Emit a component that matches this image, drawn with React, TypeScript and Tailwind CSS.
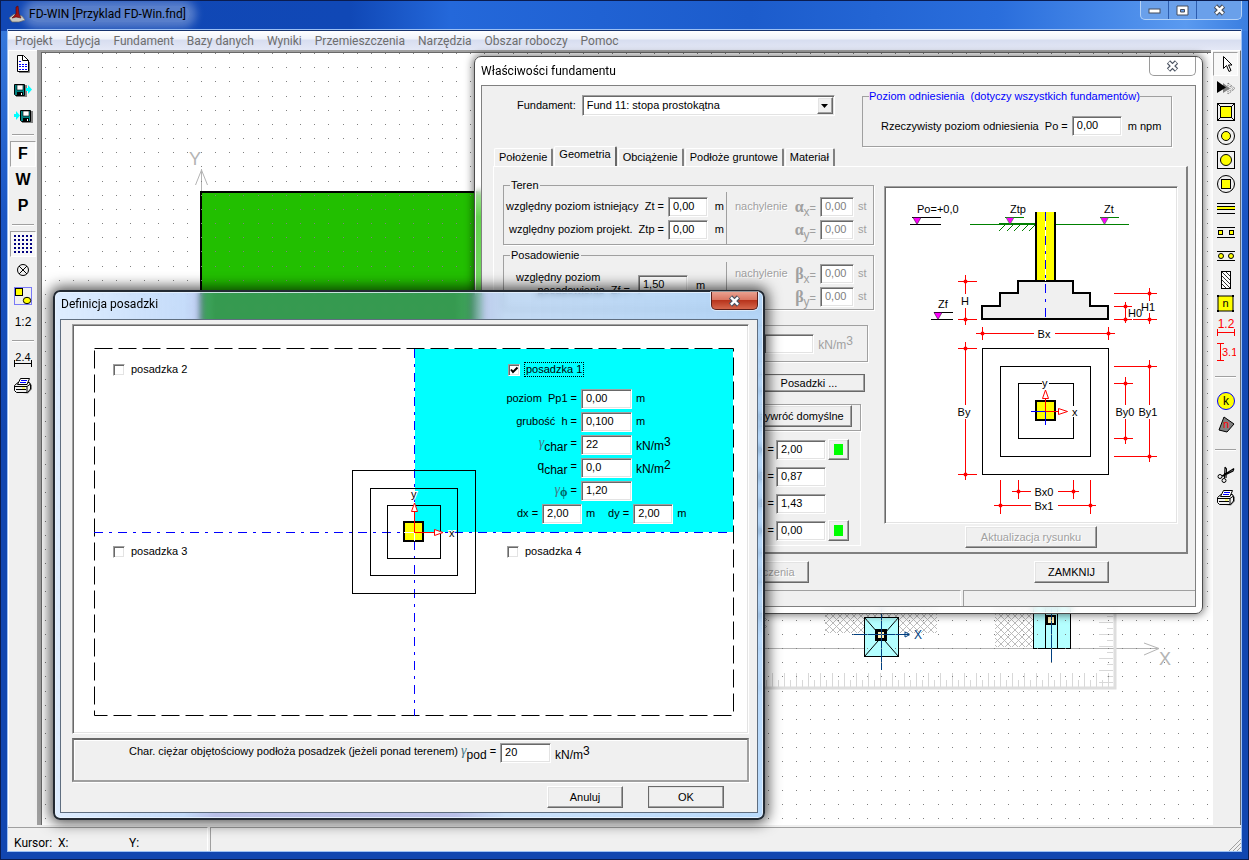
import { useState } from "react";
import type { ReactNode } from "react";

const sunken =
  "border border-t-[#a0a0a0] border-l-[#a0a0a0] border-b-white border-r-white shadow-[inset_1px_1px_0_#696969,inset_-1px_-1px_0_#e3e3e3]";
const raised =
  "border border-t-white border-l-white border-b-[#696969] border-r-[#696969] shadow-[inset_-1px_-1px_0_#a0a0a0,inset_1px_1px_0_#e3e3e3] bg-[#f0f0f0]";
const etched = "border border-[#a0a0a0] shadow-[1px_1px_0_#fff]";
const uiFont = "font-[Roboto,'Noto_Sans',sans-serif]";

type FieldProps = { id: string; value: string; width: string; disabled?: boolean };

function Field({ id, value, width, disabled }: FieldProps) {
  const [text, setText] = useState(value);
  return (
    <input
      id={id}
      type="text"
      value={text}
      disabled={disabled}
      onChange={(e) => setText(e.target.value)}
      className={`${sunken} ${width} h-5 shrink-0 bg-white px-1 pb-0.5 text-[11px] leading-[13px] text-black outline-none disabled:text-[#808080]`}
    />
  );
}

function Btn({ children, className = "", disabled }: { children: ReactNode; className?: string; disabled?: boolean }) {
  return (
    <button
      type="button"
      disabled={disabled}
      className={`${raised} flex shrink-0 items-center justify-center whitespace-nowrap text-[11px] leading-[13px] disabled:text-[#a0a0a0] disabled:[text-shadow:1px_1px_0_#fff] ${className}`}
    >
      {children}
    </button>
  );
}

function Check({ id, label, initial = false }: { id: string; label: string; initial?: boolean }) {
  const [on, setOn] = useState(initial);
  return (
    <div className="flex items-center gap-1">
      <span className="relative flex size-3">
        <input
          id={id}
          type="checkbox"
          checked={on}
          onChange={() => setOn(!on)}
          className={`${sunken} size-3 appearance-none bg-white`}
        />
        {on && (
          <svg className="pointer-events-none absolute inset-0" width="12" height="12" viewBox="0 0 12 12">
            <path d="M3 5.5 L5 8 L9.5 3.5" fill="none" stroke="#000" strokeWidth="2" />
          </svg>
        )}
      </span>
      <label
        htmlFor={id}
        className={`border border-dotted px-px text-[11px] leading-[13px] ${on ? "border-black" : "border-transparent"}`}
      >
        {label}
      </label>
    </div>
  );
}

function CloseGlyph() {
  return (
    <svg width="13" height="12" viewBox="0 0 13 12" aria-hidden="true">
      <path d="M2.5 2 L10.5 10 M10.5 2 L2.5 10" stroke="#4a5260" strokeWidth="4.6" />
      <path d="M2.9 2.4 L10.1 9.6 M10.1 2.4 L2.9 9.6" stroke="#fff" strokeWidth="2.4" />
    </svg>
  );
}

/* ---------- toolbar icons ---------- */

function Floppy({ x }: { x: number }) {
  return (
    <g transform={`translate(${x} 4)`}>
      <path d="M1 1h11v12h-11z" fill="#808080" transform="translate(1 0)" />
      <path d="M0.5 0.5h10v11h-9l-1-1z" fill="#008080" stroke="#000" />
      <path d="M3 1h6v5h-6z" fill="#fff" stroke="#000" strokeWidth=".6" />
      <path d="M3 8h6v4h-6z" fill="#000" />
      <path d="M7 9h1v2h-1z" fill="#fff" />
    </g>
  );
}

function Printer() {
  return (
    <svg width="20" height="18" viewBox="0 0 20 18">
      <path d="M4 15.5 L15 16.5 L19 12 L19 8 L16 6" fill="#808080" />
      <path d="M1.5 8.5 L5 5.5 H16.5 L17.5 8 V12 L14.5 15.5 H3.5 L1.5 13.5 Z" fill="#f0f0f0" stroke="#000" />
      <path d="M7.5 1.5 H16.5 L14 7.5 H4.5 Z" fill="#fff" stroke="#000" />
      <path d="M8 3.5h6M7 5.5h6" stroke="#00f" strokeWidth="1.2" />
      <path d="M1.5 9.5 H14 L17.5 7 M14 9.5 V15" fill="none" stroke="#000" />
      <path d="M3 12.5h10" stroke="#000" />
      <path d="M9 11h3" stroke="#ff0" />
    </svg>
  );
}

const leftTools: { name: string; icon: ReactNode; pressed?: boolean; sep?: boolean }[] = [
  {
    name: "Nowy projekt",
    icon: (
      <svg width="20" height="20" viewBox="0 0 20 20">
        <path d="M6 18.500h10.500V8" fill="none" stroke="#808080" />
        <path d="M4.500 1.500h6l5 5v11h-11z" fill="#fff" stroke="#000" />
        <path d="M9.500 1.500v5h6" fill="none" stroke="#000" />
        <path d="M6 7.500h2M6 10.500h8M6 12.500h8M6 15.500h8" fill="none" stroke="#00f" strokeDasharray="2 1" />
      </svg>
    ),
  },
  {
    name: "Zapisz",
    icon: (
      <svg width="20" height="20" viewBox="0 0 20 20">
        <Floppy x={1} />
        <path d="M13 8h2v-3l4 4.500-4 4.500v-3h-2z" fill="#0ff" />
      </svg>
    ),
  },
  {
    name: "Wczytaj",
    icon: (
      <svg width="20" height="20" viewBox="0 0 20 20">
        <path d="M1 8h2v-3l4 4.500-4 4.500v-3h-2z" fill="#0ff" />
        <Floppy x={7} />
      </svg>
    ),
    sep: true,
  },
  { name: "F", icon: <span className="text-base font-bold">F</span>, pressed: true },
  { name: "W", icon: <span className="text-base font-bold">W</span> },
  { name: "P", icon: <span className="text-base font-bold">P</span>, sep: true },
  {
    name: "Siatka",
    pressed: true,
    icon: (
      <svg width="20" height="20" viewBox="0 0 20 20">
        <defs>
          <pattern id="navy" width="4" height="4" patternUnits="userSpaceOnUse">
            <rect x="1" y="1" width="2" height="2" fill="#000080" />
          </pattern>
        </defs>
        <rect width="20" height="20" fill="url(#navy)" />
      </svg>
    ),
  },
  {
    name: "Punkt",
    icon: (
      <svg width="14" height="14" viewBox="0 0 14 14" fill="none" stroke="#000">
        <circle cx="7" cy="7" r="5.500" />
        <path d="M3 3l8 8M11 3l-8 8" />
      </svg>
    ),
  },
  {
    name: "Zaznacz",
    icon: (
      <svg width="20" height="20" viewBox="0 0 20 20">
        <rect x="1.500" y="1.500" width="17" height="17" fill="none" stroke="#00f" strokeDasharray="1 1" />
        <rect x="2.500" y="2.500" width="7" height="7" fill="#ff0" stroke="#000" />
        <ellipse cx="14" cy="14.500" rx="3.700" ry="3.200" fill="#ff0" stroke="#000" />
      </svg>
    ),
  },
  { name: "Skala 1:2", icon: <span className="text-xs">1:2</span>, sep: true },
  {
    name: "Wymiary",
    icon: (
      <svg width="20" height="18" viewBox="0 0 20 18">
        <text x="10" y="10" fontSize="11" textAnchor="middle">2.4</text>
        <path d="M1.500 9v7M18.500 9v7M1.500 12.500h17" stroke="#000" />
      </svg>
    ),
  },
  { name: "Drukuj", icon: <Printer /> },
];

const rightTools: { name: string; icon: ReactNode; pressed?: boolean; sep?: boolean }[] = [
  {
    name: "Wskaźnik",
    pressed: true,
    icon: (
      <svg width="20" height="20" viewBox="0 0 20 20">
        <path d="M7.500 2.500v12l3-3 2.500 6 2-1-2.500-5.500h3.500z" fill="#fff" stroke="#000" />
      </svg>
    ),
  },
  {
    name: "Przesuń",
    icon: (
      <svg width="20" height="18" viewBox="0 0 20 18">
        <path d="M12 4l7 5.500-7 5.500z" fill="none" stroke="#606060" strokeDasharray="1 1" />
        <path d="M14 7l3 2.500-3 2.500z" fill="none" stroke="#808080" strokeDasharray="1 1" />
        <path d="M7 4l7 5.500L7 14z" fill="#808080" />
        <path d="M1 2l9 6.500L1 14z" fill="#000" />
      </svg>
    ),
  },
  {
    name: "Stopa prostokątna",
    icon: (
      <svg width="20" height="20" viewBox="0 0 20 20" stroke="#000">
        <rect x="1.500" y="1.500" width="17" height="17" fill="#f0f0f0" />
        <path d="M1.500 1.500l17 17M18.500 1.500l-17 17" />
        <rect x="4.500" y="4.500" width="11" height="11" fill="#ff0" />
      </svg>
    ),
  },
  {
    name: "Stopa kołowa",
    icon: (
      <svg width="20" height="20" viewBox="0 0 20 20" stroke="#000">
        <circle cx="10" cy="10" r="8.500" fill="none" />
        <circle cx="10" cy="10" r="4.500" fill="#ff0" />
      </svg>
    ),
  },
  {
    name: "Stopa prostokątna, słup kołowy",
    icon: (
      <svg width="20" height="20" viewBox="0 0 20 20" stroke="#000">
        <rect x="1.500" y="1.500" width="17" height="17" fill="none" />
        <circle cx="10" cy="10" r="5.500" fill="#ff0" />
      </svg>
    ),
  },
  {
    name: "Stopa kołowa, słup prostokątny",
    icon: (
      <svg width="20" height="20" viewBox="0 0 20 20" stroke="#000">
        <circle cx="10" cy="10" r="8.500" fill="none" />
        <rect x="5.500" y="5.500" width="9" height="9" fill="#ff0" />
      </svg>
    ),
  },
  {
    name: "Ława",
    icon: (
      <svg width="20" height="14" viewBox="0 0 20 14">
        <path d="M1 7h18" stroke="#ff0" strokeWidth="3" />
        <path d="M1 2.500h18M1 5.500h18M1 8.500h18M1 12.500h18" stroke="#000" />
      </svg>
    ),
  },
  {
    name: "Ława ze słupami",
    icon: (
      <svg width="20" height="14" viewBox="0 0 20 14" stroke="#000">
        <path d="M1 2.500h18M1 12.500h18" />
        <rect x="2.500" y="5.500" width="4" height="4" fill="#ff0" />
        <rect x="13.500" y="5.500" width="4" height="4" fill="#ff0" />
      </svg>
    ),
  },
  {
    name: "Ława ze słupami kołowymi",
    icon: (
      <svg width="20" height="12" viewBox="0 0 20 12" stroke="#000">
        <path d="M1 1.500h18M1 10.500h18" />
        <circle cx="5" cy="6" r="2.500" fill="#ff0" />
        <circle cx="15" cy="6" r="2.500" fill="#ff0" />
      </svg>
    ),
  },
  {
    name: "Ściana",
    icon: (
      <svg width="12" height="20" viewBox="0 0 12 20" stroke="#000">
        <rect x="1.500" y="1.500" width="9" height="17" fill="#fff" />
        <path d="M2 2l8 8M2 6l8 8M2 10l8 8M2 14l4 4M6 2l4 4" strokeWidth=".8" />
      </svg>
    ),
  },
  {
    name: "Numer",
    icon: (
      <svg width="20" height="20" viewBox="0 0 20 20">
        <rect x="2" y="2" width="15" height="15" fill="#ff0" stroke="#000" />
        <path d="M1 1h2v2h-2zM16 1h2v2h-2zM1 16h2v2h-2zM16 16h2v2h-2z" />
        <text x="9.500" y="13" fontSize="11" textAnchor="middle">n</text>
      </svg>
    ),
  },
  {
    name: "Wymiar poziomy",
    icon: (
      <svg width="20" height="20" viewBox="0 0 20 20">
        <text x="10" y="10" fontSize="12" textAnchor="middle" fill="#f00">1.2</text>
        <path d="M1.500 11v7M18.500 11v7M1.500 14.500h17" stroke="#f00" />
      </svg>
    ),
  },
  {
    name: "Wymiar pionowy",
    sep: true,
    icon: (
      <svg width="20" height="20" viewBox="0 0 20 20">
        <text x="6" y="14" fontSize="11" fill="#f00">3.1</text>
        <path d="M1 1.500h7M1 18.500h7M4.500 1.500v17" stroke="#f00" />
      </svg>
    ),
  },
  {
    name: "Klucz k",
    icon: (
      <svg width="20" height="20" viewBox="0 0 20 20">
        <circle cx="10" cy="10" r="8.500" fill="#ff0" stroke="#00f" />
        <text x="10" y="14" fontSize="12" textAnchor="middle">k</text>
      </svg>
    ),
  },
  {
    name: "Obrys n",
    sep: true,
    icon: (
      <svg width="20" height="20" viewBox="0 0 20 20">
        <path d="M8 2L18 9 11 17 3 15z" fill="#808080" stroke="#000" />
        <text x="10" y="13" fontSize="11" textAnchor="middle" fill="#f00">n</text>
      </svg>
    ),
  },
  {
    name: "Wytnij",
    icon: (
      <svg width="20" height="20" viewBox="0 0 20 20" stroke="#000" fill="none">
        <path d="M6 12L18 4.500M18 4.500l-1 2.500L7 12M8.500 14l.5-11M9 3l1.500 2-.5 9" strokeWidth="1.100" />
        <circle cx="4" cy="12.500" r="2" />
        <circle cx="8" cy="16.500" r="2" />
      </svg>
    ),
  },
  { name: "Drukuj rysunek", icon: <Printer /> },
];

/* ---------- drawing area behind the windows ---------- */

function Ticks() {
  const items: ReactNode[] = [];
  for (let i = 0; i < 60; i++) {
    const x = 1108.5 - i * 6;
    items.push(<path key={`h${i}`} d={`M${x} ${i % 2 ? 680 : 673}V687`} />);
  }
  for (let i = 0; i < 13; i++) {
    const y = 682.5 - i * 6;
    items.push(<path key={`v${i}`} d={`M${i % 2 ? 1107 : 1099} ${y}H1113`} />);
  }
  return <g stroke="#d8d8d8">{items}</g>;
}

function Plan() {
  return (
    <svg className="absolute inset-0 size-full" aria-label="Plan fundamentów">
      <defs>
        <pattern id="dots" width="85" height="85" patternUnits="userSpaceOnUse" x="3" y="11">
          {[0, 14, 28, 42, 56, 70].map((y) =>
            [0, 14, 28, 42, 56, 70].map((x) => (
              <rect key={`${x}-${y}`} x={x} y={y} width="1" height="1" fill="#808080" />
            )),
          )}
        </pattern>
        <pattern id="cross" width="7" height="7" patternUnits="userSpaceOnUse">
          <path d="M0 0l7 7M7 0l-7 7" stroke="#b4b4b4" strokeWidth=".9" />
        </pattern>
      </defs>
      <g transform="translate(-41 -52)">
        <g fill="none" stroke="#b4b4b4">
          <path d="M201.500 192V169M195.500 185L201.500 170 207.500 185" />
          <path d="M540 648.500H1159M1144 643L1159 648.500 1144 655" />
        </g>
        <text x="189" y="165" fontSize="18" fill="#b4b4b4">Y</text>
        <text x="1159" y="665" fontSize="18" fill="#b4b4b4">X</text>
        <rect x="201" y="192" width="300" height="140" fill="#22bf00" stroke="#000" strokeWidth="2" />
        <Ticks />
        <path d="M540 688H1115V600" fill="none" stroke="#dedede" strokeWidth="3" />
        <rect x="740" y="600" width="27" height="32" fill="url(#cross)" />
        <rect x="825" y="600" width="112" height="33" fill="url(#cross)" />
        <rect x="995" y="600" width="40" height="47" fill="url(#cross)" />
        <g stroke="#000">
          <rect x="864.500" y="617.500" width="34" height="39" fill="#b4ffff" />
          <path d="M864.500 617.500L898.500 656.500M898.500 617.500L864.500 656.500" />
          <rect x="875.500" y="629.500" width="11" height="11" fill="#b4ffff" />
          <rect x="877" y="631" width="8" height="8" fill="#ffefb0" strokeWidth="2" />
          <rect x="1033.500" y="600.500" width="37" height="48" fill="#b4ffff" />
          <path d="M1045.500 600V648M1057.500 600V648" />
          <rect x="1047" y="616" width="8" height="8" fill="#ffefb0" strokeWidth="2" />
        </g>
        <g stroke="#003f80" fill="none">
          <path d="M852 634.500H910M881.500 600V670M1051.500 600V662M905 632L910 634.500 905 637z" />
        </g>
        <text x="914" y="639" fontSize="12" fill="#003f80">X</text>
        <rect x="41" y="52" width="1300" height="1100" fill="url(#dots)" />
      </g>
    </svg>
  );
}

/* ---------- dimension figure of the foundation ---------- */

function Dot({ x, y }: { x: number; y: number }) {
  return <circle cx={x} cy={y} r="2" fill="#f00" stroke="none" />;
}

function FootingFigure() {
  return (
    <svg width="290" height="334" aria-label="Rysunek stopy prostokątnej">
      <g transform="translate(-886 -188)" fontSize="11">
        <g fill="none" stroke="#000">
          <path d="M912 217.500H941M910 224.500H941M934 312.500H953M931 319.500H953" />
        </g>
        <g fill="none" stroke="#008000">
          <path d="M970 224.500H1129M999 223.500H1036M1005 217.500H1024M1100 217.500H1119" />
          <path d="M999 231l7-7M1007 231l7-7M1014 231l7-7M1022 231l7-7M1029 231l7-7" />
        </g>
        <g fill="#f0f">
          <path d="M913 217.500h8l-4 7z" stroke="#000" strokeWidth=".5" />
          <path d="M934 312.500h8l-4 7z" stroke="#000" strokeWidth=".5" />
          <path d="M1006 217.500h8l-4 7z" stroke="#008000" strokeWidth=".5" />
          <path d="M1100.500 217.500h8l-4 7z" stroke="#008000" strokeWidth=".5" />
        </g>
        <text x="917" y="213">Po=+0,0</text>
        <text x="1010" y="213">Ztp</text>
        <text x="1104" y="213">Zt</text>
        <text x="938" y="308">Zf</text>
        <rect x="1036" y="212" width="19" height="69" fill="#ff0" />
        <path d="M1036 212V280M1055 212V280" stroke="#000" strokeWidth="2" />
        <path
          d="M1018 281H1073V293H1090V306H1108V319H982V306H1000V293H1018Z"
          fill="#f0f0f0"
          stroke="#000"
          strokeWidth="2"
        />
        <path d="M1045.500 212V281" stroke="#fff" />
        <path d="M1045.500 212V323" stroke="#00f" strokeDasharray="9 6 3 6" />
        <g fill="none" stroke="#000">
          <rect x="982.500" y="348.500" width="126" height="126" />
          <rect x="1000.500" y="366.500" width="90" height="90" />
          <rect x="1018.500" y="383.500" width="55" height="55" />
        </g>
        <rect x="1036" y="401" width="19" height="19" fill="#ff0" stroke="#000" strokeWidth="2" />
        <path d="M1031 411.500H1045M1045.500 411V425" stroke="#00f" />
        <path d="M1045.500 411.500V398M1045.500 411.500H1058" stroke="#f00" />
        <path d="M1045.500 390L1042.500 398.500H1048.500ZM1067.500 411.500L1058.500 408.500V414.500Z" fill="#fff" stroke="#f00" />
        <rect x="1042" y="378" width="7" height="11" fill="#fff" />
        <rect x="1071" y="406" width="8" height="11" fill="#fff" />
        <text x="1042" y="387">y</text>
        <text x="1072" y="416">x</text>
        <g fill="none" stroke="#f00">
          <path d="M965.500 275V294M965.500 308V325M958 281.500H977M958 319.500H977" />
          <path d="M1125.500 302V323M1114 306.500H1132M1114 319.500H1132" />
          <path d="M1149.500 288V301M1149.500 313V324M1114 293.500H1157M1133 319.500H1157" />
          <path d="M976 333.500H1034M1055 333.500H1115M982.500 327V340M1108.500 327V340" />
          <path d="M965.500 342V405M965.500 419V480M958 348.500H977M958 474.500H977" />
          <path d="M1125.500 377V405M1125.500 419V444M1114 383.500H1133M1114 438.500H1133" />
          <path d="M1149.500 360V405M1149.500 419V462M1114 366.500H1157M1114 456.500H1157" />
          <path d="M1012 491.500H1031M1058 491.500H1079M1018.500 480V499M1073.500 480V499" />
          <path d="M994 505.500H1031M1058 505.500H1096M1000.500 480V514M1090.500 480V514" />
        </g>
        <Dot x={965.5} y={281.5} />
        <Dot x={965.5} y={319.5} />
        <Dot x={1125.5} y={306.5} />
        <Dot x={1125.5} y={319.5} />
        <Dot x={1149.5} y={293.5} />
        <Dot x={1149.5} y={319.5} />
        <Dot x={982.5} y={333.5} />
        <Dot x={1108.5} y={333.5} />
        <Dot x={965.5} y={348.5} />
        <Dot x={965.5} y={474.5} />
        <Dot x={1125.5} y={383.5} />
        <Dot x={1125.5} y={438.5} />
        <Dot x={1149.5} y={366.5} />
        <Dot x={1149.5} y={456.5} />
        <Dot x={1018.5} y={491.5} />
        <Dot x={1073.5} y={491.5} />
        <Dot x={1000.5} y={505.5} />
        <Dot x={1090.5} y={505.5} />
        <g textAnchor="middle">
          <text x="965" y="305">H</text>
          <text x="1135" y="317">H0</text>
          <text x="1148" y="311">H1</text>
          <text x="1044" y="338">Bx</text>
          <text x="964" y="416">By</text>
          <text x="1125" y="416">By0</text>
          <text x="1148" y="416">By1</text>
          <text x="1044" y="496">Bx0</text>
          <text x="1044" y="510">Bx1</text>
        </g>
      </g>
    </svg>
  );
}

function FloorFigure() {
  return (
    <svg className="absolute inset-0 size-full" aria-label="Układ posadzek">
      <g transform="translate(-73 -325)" fontSize="11">
        <rect x="415" y="349" width="318" height="183" fill="#0ff" />
        <rect x="94.500" y="348.500" width="639" height="367" fill="none" stroke="#000" strokeDasharray="18 6" />
        <path d="M94 532.500H733M414.500 349V716" stroke="#00f" fill="none" strokeDasharray="9 6 3 6" />
        <g fill="none" stroke="#000">
          <rect x="352.500" y="470.500" width="123" height="123" />
          <rect x="370.500" y="488.500" width="87" height="87" />
          <rect x="387.500" y="505.500" width="53" height="53" />
        </g>
        <rect x="404" y="522" width="19" height="19" fill="#ff0" stroke="#000" strokeWidth="2" />
        <path d="M404 532.500H414M414.500 533V541" stroke="#fff" />
        <path d="M414.500 532.500V511M414.500 532.500H434" stroke="#f00" />
        <path d="M414.500 503L411.500 511.500H417.500ZM443 532.500L434.500 529.500V535.500Z" fill="#fff" stroke="#f00" />
        <text x="411" y="498" stroke="#fff" strokeWidth="2" paintOrder="stroke">y</text>
        <text x="449" y="537" stroke="#fff" strokeWidth="2" paintOrder="stroke">x</text>
      </g>
    </svg>
  );
}

/* ---------- chrome ---------- */

const menu = [
  "Projekt",
  "Edycja",
  "Fundament",
  "Bazy danych",
  "Wyniki",
  "Przemieszczenia",
  "Narzędzia",
  "Obszar roboczy",
  "Pomoc",
];

function Tool({ name, icon, pressed, sep, size, gap }: { name: string; icon: ReactNode; pressed?: boolean; sep?: boolean; size: string; gap: string }) {
  return (
    <>
      <button
        type="button"
        aria-label={name}
        aria-pressed={!!pressed}
        className={`flex ${size} w-full items-center justify-center ${pressed ? "border border-t-[#a0a0a0] border-l-[#a0a0a0] border-r-white border-b-white bg-[#f8f8f8]" : ""}`}
      >
        {icon}
      </button>
      {sep && (
        <div className={`flex ${gap} items-center px-0.5`}>
          <div className="h-0.5 w-full border-b border-b-white bg-[#a0a0a0]" />
        </div>
      )}
    </>
  );
}

function Low({ children }: { children: ReactNode }) {
  return <span className="align-[-4px] text-xs leading-3">{children}</span>;
}

function Unit({ power }: { power: string }) {
  return (
    <span className="text-xs leading-3">
      kN/m<span className="align-[4px]">{power}</span>
    </span>
  );
}

function Gamma() {
  return <span className="font-['Liberation_Serif',serif] text-sm leading-3 text-[#4a7a86] italic">γ</span>;
}

function Greek({ base, sub }: { base: string; sub: string }) {
  return (
    <span className="text-[#a0a0a0]">
      <span className="font-['Liberation_Serif',serif] text-base font-bold">{base}</span>
      <Low>{sub}</Low>=
    </span>
  );
}

function SlopeRow({ id, label, base, sub }: { id: string; label?: string; base: string; sub: string }) {
  return (
    <div className="flex h-[23px] items-center">
      <label htmlFor={id} className="flex w-[81px] items-center justify-between text-[#a0a0a0]">
        <span className="[text-shadow:1px_1px_0_#fff]">{label}</span>
        <Greek base={base} sub={sub} />
      </label>
      <span className="pl-1">
        <Field id={id} value="0,00" width="w-[34px]" disabled />
      </span>
      <span className="pl-1 text-[#a0a0a0]">st</span>
    </div>
  );
}

function LevelRow({ id, label }: { id: string; label: string }) {
  return (
    <div className="flex h-[23px] items-center justify-end gap-1 pr-0.5">
      <label htmlFor={id} className="whitespace-pre">{label}</label>
      <Field id={id} value="0,00" width="w-10" />
      <span className="w-3 text-right">m</span>
    </div>
  );
}

function GreenButton({ name }: { name: string }) {
  return (
    <Btn className="h-[21px] w-[21px]">
      <span className="block h-[11px] w-[9px] bg-[#0f0]" aria-label={name} />
    </Btn>
  );
}

function SizeRow({ id, label, value, pick }: { id: string; label: string; value: string; pick?: boolean }) {
  return (
    <div className="flex h-[27px] items-center gap-0.5">
      <label htmlFor={id} className="w-[271px] text-right">{label}</label>
      <Field id={id} value={value} width="w-[50px]" />
      {pick && <GreenButton name="wybierz" />}
    </div>
  );
}

const tabs = ["Położenie", "Geometria", "Obciążenie", "Podłoże gruntowe", "Materiał"];

function PropertiesWindow() {
  const [tab, setTab] = useState("Geometria");
  return (
    <section
      aria-label="Właściwości fundamentu"
      className="absolute top-[55px] left-[473px] flex h-[558px] w-[729px] flex-col rounded-[7px] border border-[#4c4c4c] bg-[linear-gradient(to_bottom,#fff_0,#fff_100px,rgba(255,255,255,0.3)_160px,rgba(255,255,255,0.7)_100%)] px-1.5 pb-1.5 shadow-[0_0_8px_1px_rgba(0,0,0,0.55),inset_0_0_0_1px_rgba(255,255,255,0.8)] backdrop-blur-[3px]"
    >
      <header className="flex h-7 shrink-0 items-start justify-between">
        <h2 className={`${uiFont} pt-1.5 text-xs leading-4`}>Właściwości fundamentu</h2>
        <button
          type="button"
          aria-label="Zamknij okno"
          className="flex h-[19px] w-[47px] items-center justify-center rounded-b-[5px] border border-t-0 border-[#9a9a9a] bg-white"
        >
          <CloseGlyph />
        </button>
      </header>
      <div className="flex min-h-0 flex-1 flex-col border border-[#808080] bg-[#f0f0f0]">
        <div className="flex h-[61px] shrink-0 items-start justify-between pr-[23px] pl-[35px]">
          <div className="flex items-center gap-1.5 pt-[9px]">
            <label htmlFor="fund">Fundament:</label>
            <span className="relative flex">
              <select id="fund" className={`${sunken} h-[21px] w-[253px] appearance-none bg-white pl-1 text-[11px] leading-[13px] outline-none`}>
                <option>Fund 11: stopa prostokątna</option>
              </select>
              <span className={`${raised} pointer-events-none absolute top-0.5 right-0.5 flex h-[17px] w-4 items-center justify-center`}>
                <svg width="7" height="4" viewBox="0 0 7 4"><path d="M0 0h7L3.500 4z" /></svg>
              </span>
            </span>
          </div>
          <fieldset className={`${etched} mt-1 h-[57px] w-[310px] pl-[18px]`}>
            <legend className="-ml-3 whitespace-pre text-[#00f]">Poziom odniesienia  (dotyczy wszystkich fundamentów)</legend>
            <div className="flex items-center gap-1 pt-[13px]">
              <label htmlFor="po" className="whitespace-pre">Rzeczywisty poziom odniesienia  Po =</label>
              <Field id="po" value="0,00" width="w-[50px]" />
              <span className="pl-0.5">m npm</span>
            </div>
          </fieldset>
        </div>
        <div role="tablist" className="flex h-[19px] shrink-0 items-end gap-px pl-3">
          {tabs.map((t) => (
            <button
              key={t}
              type="button"
              role="tab"
              aria-selected={t === tab}
              onClick={() => setTab(t)}
              className={`rounded-t-[2px] border-t border-l border-t-white border-l-white bg-[#f0f0f0] px-1 text-[11px] leading-[13px] ${
                t === tab ? "h-5 border-r-2 border-r-[#696969] pb-1" : "h-[18px] border-r-2 border-r-[#808080]"
              }`}
            >
              {t}
            </button>
          ))}
        </div>
        <div className="mr-[7px] ml-[11px] flex h-[388px] shrink-0 justify-between border-t border-l border-t-white border-l-white border-r-2 border-b-2 border-r-[#808080] border-b-[#808080] pr-2 pl-[9px]">
          <div className="flex w-[371px] flex-col pt-3">
            <fieldset className={`${etched} h-[66px] shrink-0`}>
              <legend className="ml-1.5 px-px">Teren</legend>
              <div className="flex h-[52px] items-start">
                <div className="h-full w-[223px] border-r border-[#a0a0a0] pt-[3px]">
                  <LevelRow id="zt" label="względny poziom istniejący  Zt =" />
                  <LevelRow id="ztp" label="względny poziom projekt.  Ztp =" />
                </div>
                <div className="pt-[3px] pl-2">
                  <SlopeRow id="ax" label="nachylenie" base="α" sub="x" />
                  <SlopeRow id="ay" base="α" sub="y" />
                </div>
              </div>
            </fieldset>
            <fieldset className={`${etched} mt-1 h-[61px] shrink-0`}>
              <legend className="ml-1.5 px-px">Posadowienie</legend>
              <div className="flex h-[47px] items-start">
                <div className="flex h-full w-[223px] items-start gap-2 border-r border-[#a0a0a0] pt-[9px] pl-3">
                  <label htmlFor="zf" className="w-[114px] whitespace-pre">
                    względny poziom{"\n"}       posadowienie  Zf =
                  </label>
                  <span className="flex items-center gap-2 pt-1">
                    <Field id="zf" value="1,50" width="w-[50px]" />
                    m
                  </span>
                </div>
                <div className="pl-2">
                  <SlopeRow id="bx" label="nachylenie" base="β" sub="x" />
                  <SlopeRow id="by" base="β" sub="y" />
                </div>
              </div>
            </fieldset>
            <div className={`${etched} mt-[15px] flex h-[37px] w-[365px] shrink-0 items-center justify-end gap-1 pr-3.5`}>
              <label htmlFor="gz" className="text-[#a0a0a0]">γ =</label>
              <Field id="gz" value="" width="w-[50px]" disabled />
              <span className="text-[#a0a0a0]"><Unit power="3" /></span>
            </div>
            <div className="mt-3 flex w-[362px] shrink-0 justify-end">
              <Btn className="h-[18px] w-28 outline outline-1 -outline-offset-1 outline-[#696969]">Posadzki ...</Btn>
            </div>
            <div className={`${etched} mt-3 flex h-[27px] w-[358px] shrink-0 items-start justify-end pr-2`}>
              <Btn className="h-[22px] w-28">Przywróć domyślne</Btn>
            </div>
            <div className="flex h-[115px] w-[358px] shrink-0 flex-col border-r border-b border-white pt-[5px]">
              <SizeRow id="Bx" label="Bx =" value="2,00" pick />
              <SizeRow id="B0" label="Bx0 =" value="0,87" />
              <SizeRow id="B1" label="Bx1 =" value="1,43" />
              <SizeRow id="Ex" label="ex =" value="0,00" pick />
            </div>
          </div>
          <div className="flex flex-col items-center gap-0.5 pt-[19px]">
            <div className={`${sunken} bg-white p-px`}>
              <FootingFigure />
            </div>
            <Btn disabled className="h-[22px] w-[132px]">Aktualizacja rysunku</Btn>
          </div>
        </div>
        <div className="flex flex-1 items-center justify-between pr-[86px] pl-[215px]">
          <Btn disabled className="h-[22px] w-28">Przemieszczenia</Btn>
          <Btn className="h-[22px] w-[75px] text-xs">ZAMKNIJ</Btn>
        </div>
        <div className="flex h-4 shrink-0 gap-0.5">
          <div className="flex-1 border-t border-r border-t-[#a0a0a0] border-r-white" />
          <div className="w-[232px] border-t border-l border-[#a0a0a0]" />
        </div>
      </div>
    </section>
  );
}

function FloorRow({ id, label, value, unit }: { id: string; label: ReactNode; value: string; unit?: ReactNode }) {
  return (
    <div className="flex h-[23px] items-center gap-1">
      <label htmlFor={id} className="w-[163px] text-right whitespace-pre">{label}</label>
      <Field id={id} value={value} width="w-[51px]" />
      <span>{unit}</span>
    </div>
  );
}

function FloorWindow() {
  return (
    <section
      aria-label="Definicja posadzki"
      className="absolute top-[289px] left-[52px] flex h-[530px] w-[712px] flex-col rounded-[7px] border-2 border-[#232a33] bg-[linear-gradient(to_right,rgba(200,225,255,0.6)_0,rgba(140,185,245,0.5)_130px,rgba(84,100,200,0.4)_160px,rgba(84,100,200,0.4)_400px,rgba(150,195,245,0.5)_450px,rgba(140,195,250,0.6)_100%)] px-[5px] pb-[5px] shadow-[0_0_14px_3px_rgba(0,0,0,0.7),inset_0_0_0_1px_rgba(235,245,255,0.8)] backdrop-blur-[3px]"
    >
      <header className="flex h-[27px] shrink-0 items-start justify-between">
        <h2 className={`${uiFont} pt-1 pl-px text-xs leading-4`}>Definicja posadzki</h2>
        <button
          type="button"
          aria-label="Zamknij okno"
          className="flex h-[18px] w-[47px] items-center justify-center rounded-b-[5px] border border-t-0 border-[#5a1f1a] bg-[linear-gradient(to_bottom,#e9a08f_0,#d97763_45%,#b8341c_50%,#d5674c_100%)] shadow-[0_0_0_1px_rgba(255,255,255,0.5)]"
        >
          <CloseGlyph />
        </button>
      </header>
      <div className="flex min-h-0 flex-1 flex-col border border-[#5f6e80] bg-[#f0f0f0] pt-1 pr-2 pl-[11px]">
        <div className={`${sunken} relative grid h-[410px] shrink-0 grid-cols-[341px_1fr] grid-rows-[207px_1fr] bg-white`}>
          <FloorFigure />
          <div className="relative pt-[37px] pl-10">
            <Check id="p2" label="posadzka 2" />
          </div>
          <div className="relative pt-[37px]">
            <div className="pl-[94px]">
              <Check id="p1" label="posadzka 1" initial />
            </div>
            <div className="pt-2.5">
              <FloorRow id="pp1" label="poziom  Pp1 =" value="0,00" unit="m" />
              <FloorRow id="h" label="grubość  h =" value="0,100" unit="m" />
              <FloorRow id="gch" label={<><Gamma /><Low>char</Low> =</>} value="22" unit={<Unit power="3" />} />
              <FloorRow
                id="qch"
                label={<><span className="text-xs leading-3">q</span><Low>char</Low> =</>}
                value="0,0"
                unit={<Unit power="2" />}
              />
              <FloorRow
                id="gf"
                label={<><Gamma /><span className="align-[-2px] font-['Liberation_Serif',serif] text-xs leading-3 font-bold text-[#006868]">ϕ</span> =</>}
                value="1,20"
              />
              <div className="flex h-[23px] items-center gap-1 pl-[103px]">
                <label htmlFor="dx">dx =</label>
                <Field id="dx" value="2,00" width="w-10" />
                <span className="w-[18px]">m</span>
                <label htmlFor="dy">dy =</label>
                <Field id="dy" value="2,00" width="w-10" />
                <span>m</span>
              </div>
            </div>
          </div>
          <div className="relative pt-3 pl-10">
            <Check id="p3" label="posadzka 3" />
          </div>
          <div className="relative pt-3 pl-[93px]">
            <Check id="p4" label="posadzka 4" />
          </div>
        </div>
        <div className="mt-1 flex h-11 shrink-0 items-start border-2 border-t-[#696969] border-l-[#808080] border-r-[#a0a0a0] border-b-[#a0a0a0] pt-[3px] pl-[55px] shadow-[1px_1px_0_#fff,inset_1px_1px_0_#fff]">
          <div className="flex items-center gap-1">
            <label htmlFor="gpod">
              Char. ciężar objętościowy podłoża posadzek (jeżeli ponad terenem) <Gamma />
              <Low>pod</Low> =
            </label>
            <Field id="gpod" value="20" width="w-[51px]" />
            <Unit power="3" />
          </div>
        </div>
        <div className="flex gap-[25px] self-end pt-1 pr-[25px]">
          <Btn className="h-[22px] w-[76px]">Anuluj</Btn>
          <Btn className="h-[22px] w-[76px] outline outline-1 -outline-offset-1 outline-[#696969]">OK</Btn>
        </div>
      </div>
    </section>
  );
}

export default function App() {
  return (
    <div className="relative flex h-screen flex-col overflow-hidden border border-[#0a1c50] bg-[linear-gradient(to_right,#1147b4_0,#1048b6_28%,#2468da_36%,#1c5ccc_60%,#2a6edc_80%,#5a9af0_95%,#3a7ee0_100%),linear-gradient(to_bottom,#3a7ee0_0,#1a55c4_25%,#1146b0_50%,#1146b0_100%)] bg-[length:100%_30px,100%_100%] bg-no-repeat px-1.5 pb-[7px] font-['Liberation_Sans',Arial,sans-serif] text-[11px] leading-[13px] text-black">
      <header className="flex h-7 shrink-0 items-start justify-between">
        <div className="flex items-center gap-1 pt-1 pl-0.5">
          <svg width="16" height="18" viewBox="0 0 16 18">
            <path d="M0 13L5 9 13 11 16 15 10 17 3 17z" fill="#c8c8c0" stroke="#606060" strokeWidth=".7" />
            <path d="M7 2L9 1 10 9 12 13 7 12 3 13 7 9z" fill="#a01010" stroke="#500" strokeWidth=".6" />
          </svg>
          <h1 className={`${uiFont} rounded-full bg-white/30 pr-1 text-xs leading-4 shadow-[0_0_8px_6px_rgba(255,255,255,0.3)]`}>
            FD-WIN [Przyklad FD-Win.fnd]
          </h1>
        </div>
        <div className="flex h-[19px] overflow-hidden rounded-b-[5px] border border-t-0 border-[#b4d2f8] bg-[#6aa0ea]">
          <button type="button" aria-label="Minimalizuj" className="flex w-7 items-center justify-center border-r border-[#2c5cae]">
            <svg width="13" height="8" viewBox="0 0 13 8"><rect x="1" y="3" width="11" height="4" fill="#fff" stroke="#444c5c" /></svg>
          </button>
          <button type="button" aria-label="Maksymalizuj" className="flex w-7 items-center justify-center border-r border-[#2c5cae]">
            <svg width="13" height="11" viewBox="0 0 13 11">
              <path d="M1 1h11v9H1zM4.500 4.500h4v2.500h-4z" fill="#fff" fillRule="evenodd" stroke="#444c5c" />
            </svg>
          </button>
          <button type="button" aria-label="Zamknij program" className="flex w-11 items-center justify-center">
            <CloseGlyph />
          </button>
        </div>
      </header>

      <div className="flex min-h-0 flex-1 flex-col border border-[#9cc0f4] bg-[#f0f0f0]">
        <nav className={`${uiFont} flex h-5 shrink-0 items-center gap-[13px] border-t border-[#16336e] bg-[linear-gradient(to_bottom,#fff_0,#f0f3fa_40%,#d8def0_50%,#e4e8f6_100%)] px-[7px] text-xs leading-4 text-[#6d6d6d]`}>
          {menu.map((m) => (
            <button key={m} type="button">{m}</button>
          ))}
        </nav>
        <div className="flex min-h-0 flex-1">
          <div role="toolbar" aria-label="Projekt" className="flex w-[29px] shrink-0 flex-col border-t border-l border-white px-px">
            {leftTools.map((t) => (
              <Tool key={t.name} {...t} size="h-[26px]" gap="h-3" />
            ))}
          </div>
          <main className="relative min-w-0 flex-1 overflow-hidden border-t-2 border-l-[4px] border-[#a0a0a0] bg-white shadow-[inset_1px_1px_0_#696969]">
            <Plan />
          </main>
          <div role="toolbar" aria-label="Rysowanie" className="flex w-[30px] shrink-0 flex-col border-t border-r border-l-2 border-t-white border-r-[#696969] border-l-white pt-px pr-0.5">
            {rightTools.map((t) => (
              <Tool key={t.name} {...t} size="h-6" gap="h-[25px]" />
            ))}
          </div>
        </div>
        <footer className={`${uiFont} flex h-[26px] shrink-0 gap-0.5 pt-0.5 text-xs leading-4`}>
          <div className="flex w-[200px] items-end border-t border-r border-t-[#a0a0a0] border-r-white pl-1.5">
            <span className="w-11">Kursor:</span>
            <span className="w-[71px]">X:</span>
            <span>Y:</span>
          </div>
          <div className="flex flex-1 items-end justify-end border-t border-l border-[#a0a0a0]">
            <svg width="14" height="14" viewBox="0 0 14 14" stroke="#a0a0a0">
              <path d="M2 14L14 2M6 14L14 6M10 14L14 10" />
            </svg>
          </div>
        </footer>
      </div>

      <PropertiesWindow />
      <FloorWindow />
    </div>
  );
}
